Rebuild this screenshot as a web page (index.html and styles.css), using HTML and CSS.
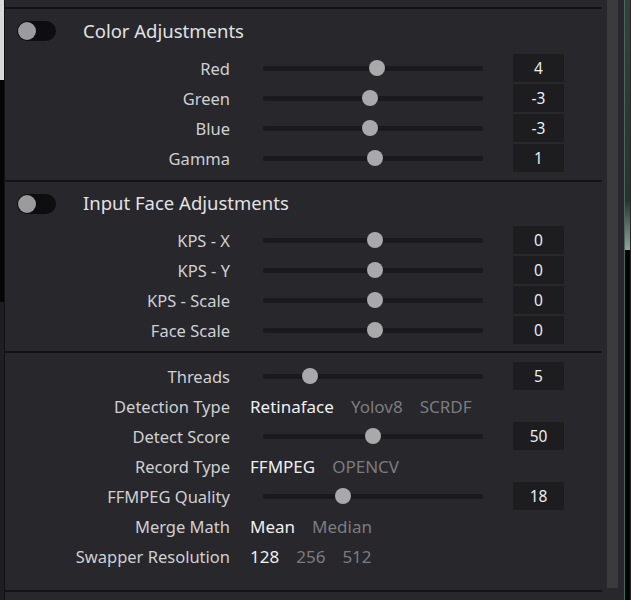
FILE: index.html
```html
<!DOCTYPE html>
<html lang="en">
<head>
  <meta charset="UTF-8">
  <meta name="viewport" content="width=device-width, initial-scale=1.0">
  <title>Parameters</title>
  <link rel="stylesheet" href="styles.css">
</head>
<body>
  <div class="app">
    <div class="edge-left">
      <div class="edge-light"></div>
      <div class="edge-black"></div>
      <div class="edge-dark"></div>
    </div>

    <div class="panel">
      <div class="panel-top"></div>

      <!-- Color adjustments -->
      <section class="group group-color">
        <div class="group-head">
          <div class="toggle"><span class="toggle-knob"></span></div>
          <span class="group-title">Color Adjustments</span>
        </div>
        <div class="row">
          <span class="label">Red</span>
          <div class="slider"><span class="knob" style="left: 52%"></span></div>
          <span class="value">4</span>
        </div>
        <div class="row">
          <span class="label">Green</span>
          <div class="slider"><span class="knob" style="left: 48.5%"></span></div>
          <span class="value">-3</span>
        </div>
        <div class="row">
          <span class="label">Blue</span>
          <div class="slider"><span class="knob" style="left: 48.5%"></span></div>
          <span class="value">-3</span>
        </div>
        <div class="row">
          <span class="label">Gamma</span>
          <div class="slider"><span class="knob" style="left: 51%"></span></div>
          <span class="value">1</span>
        </div>
      </section>

      <!-- Input face adjustments -->
      <section class="group group-face">
        <div class="group-head">
          <div class="toggle"><span class="toggle-knob"></span></div>
          <span class="group-title">Input Face Adjustments</span>
        </div>
        <div class="row">
          <span class="label">KPS - X</span>
          <div class="slider"><span class="knob" style="left: 51%"></span></div>
          <span class="value">0</span>
        </div>
        <div class="row">
          <span class="label">KPS - Y</span>
          <div class="slider"><span class="knob" style="left: 51%"></span></div>
          <span class="value">0</span>
        </div>
        <div class="row">
          <span class="label">KPS - Scale</span>
          <div class="slider"><span class="knob" style="left: 51%"></span></div>
          <span class="value">0</span>
        </div>
        <div class="row">
          <span class="label">Face Scale</span>
          <div class="slider"><span class="knob" style="left: 51%"></span></div>
          <span class="value">0</span>
        </div>
      </section>

      <!-- General settings -->
      <section class="group group-general">
        <div class="row">
          <span class="label">Threads</span>
          <div class="slider"><span class="knob" style="left: 21.5%"></span></div>
          <span class="value">5</span>
        </div>
        <div class="row">
          <span class="label">Detection Type</span>
          <div class="options">
            <span class="opt active">Retinaface</span>
            <span class="opt">Yolov8</span>
            <span class="opt">SCRDF</span>
          </div>
        </div>
        <div class="row">
          <span class="label">Detect Score</span>
          <div class="slider"><span class="knob" style="left: 50%"></span></div>
          <span class="value">50</span>
        </div>
        <div class="row">
          <span class="label">Record Type</span>
          <div class="options">
            <span class="opt active">FFMPEG</span>
            <span class="opt">OPENCV</span>
          </div>
        </div>
        <div class="row">
          <span class="label">FFMPEG Quality</span>
          <div class="slider"><span class="knob" style="left: 36.5%"></span></div>
          <span class="value">18</span>
        </div>
        <div class="row">
          <span class="label">Merge Math</span>
          <div class="options">
            <span class="opt active">Mean</span>
            <span class="opt">Median</span>
          </div>
        </div>
        <div class="row">
          <span class="label">Swapper Resolution</span>
          <div class="options">
            <span class="opt active">128</span>
            <span class="opt">256</span>
            <span class="opt">512</span>
          </div>
        </div>
      </section>

      <div class="panel-foot"></div>
    </div>

    <div class="scroll">
      <div class="scroll-thumb"></div>
    </div>
    <div class="edge-right">
      <div class="edge-image"></div>
      <div class="edge-black"></div>
    </div>
  </div>
</body>
</html>
```

FILE: styles.css
```css
body {
  margin: 0;
  padding: 0;
  background-color: #27272c;
  font-family: 'Noto Sans', 'Open Sans', Arial, sans-serif;
  color: #d2d2d4;
}

.app {
  display: flex;
  width: 631px;
  height: 600px;
  overflow: hidden;
}

/* strips of the neighbouring windows */
.edge-left {
  display: flex;
  flex-direction: column;
  width: 4px;
  border-right: 1px solid #121214;
}

.edge-light {
  height: 80px;
  background-color: #d9d9d9;
}

.edge-black {
  height: 222px;
  background-color: #050505;
}

.edge-dark {
  flex-grow: 1;
  background-color: #1f1f23;
}

.edge-right {
  display: flex;
  flex-direction: column;
  width: 5px;
  border-left: 1px solid #3f6a66;
}

.edge-image {
  height: 250px;
  background: linear-gradient(#3b3f33, #2c312a 80%, #9aa096);
}

.edge-right .edge-black {
  flex-grow: 1;
}

/* main panel */
.panel {
  width: 602px;
  display: flex;
  flex-direction: column;
  background-color: #27272c;
}

.panel-top {
  height: 7px;
  margin-right: 5px;
  border-bottom: 2px solid #141417;
}

.group {
  margin-right: 5px;
  border-bottom: 2px solid #141417;
}

.group-color {
  padding-bottom: 7px;
}

.group-face {
  padding-bottom: 6px;
}

.group-general {
  padding-top: 8px;
  padding-bottom: 19px;
}

.group-head {
  display: flex;
  align-items: center;
  height: 44px;
}

.group-face .group-head {
  height: 43px;
}

.toggle {
  width: 39px;
  height: 20px;
  margin-left: 12px;
  border-radius: 10px;
  background-color: #0e0e10;
  display: flex;
  align-items: center;
}

.toggle-knob {
  width: 18px;
  height: 18px;
  margin-left: 1px;
  border-radius: 50%;
  background-color: #9b9b9d;
}

.group-title {
  margin-left: 27px;
  margin-top: -2px;
  font-size: 18.5px;
  color: #e2e2e4;
}

.row {
  display: flex;
  align-items: center;
  height: 30px;
}

.label {
  width: 225px;
  text-align: right;
  font-size: 16.5px;
  color: #d0d0d2;
}

.slider {
  position: relative;
  width: 220px;
  height: 5px;
  margin-left: 33px;
  background-color: #1a1a1d;
  border-radius: 2px;
}

.knob {
  position: absolute;
  top: 50%;
  width: 16px;
  height: 16px;
  border-radius: 50%;
  background-color: #a9a9ab;
  transform: translate(-50%, -50%);
}

.value {
  width: 51px;
  height: 28px;
  line-height: 28px;
  margin-left: 30px;
  text-align: center;
  font-size: 15.5px;
  color: #ececee;
  background-color: #1d1d20;
}

.options {
  display: flex;
  gap: 17px;
  margin-left: 20px;
  font-size: 17px;
}

.opt {
  color: #7c7c80;
}

.opt.active {
  color: #f0f0f2;
}

.panel-foot {
  flex-grow: 1;
}

/* scrollbar */
.scroll {
  width: 17px;
}

.scroll-thumb {
  width: 11px;
  height: 588px;
  background-color: #3b3b3e;
}
```
